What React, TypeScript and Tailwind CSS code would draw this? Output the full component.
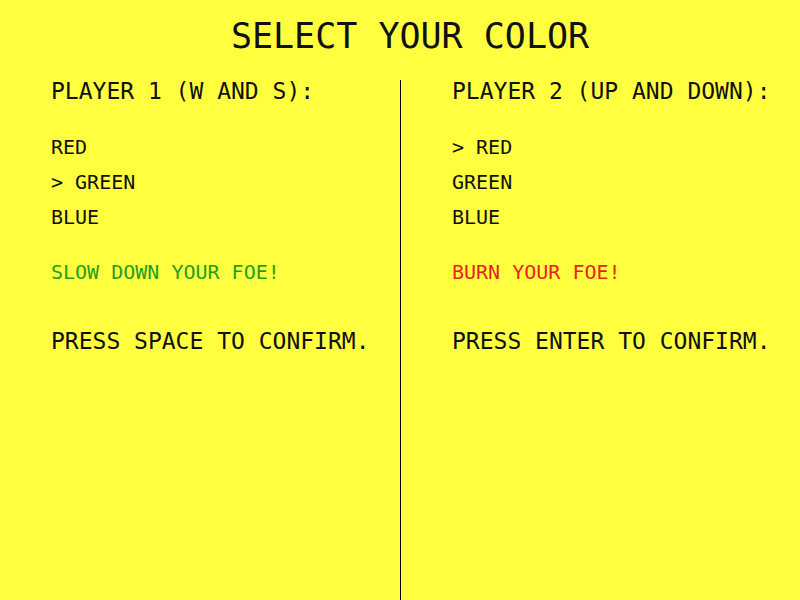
import React from "react";

const font = { fontFamily: '"DejaVu Sans Mono", "Liberation Mono", monospace' };

function Column({
  header,
  options,
  selected,
  hint,
  hintClass,
  confirm,
}: {
  header: string;
  options: string[];
  selected: number;
  hint: string;
  hintClass: string;
  confirm: string;
}) {
  return (
    <div className="flex flex-col flex-1 pl-[51px]">
      <div className="text-[23px] leading-[23px] whitespace-pre">{header}</div>
      <div className="flex flex-col gap-[15px] mt-[34px] text-[20px] leading-[20px]">
        {options.map((o, i) => (
          <div key={o} className="whitespace-pre">
            {i === selected ? "> " + o : o}
          </div>
        ))}
      </div>
      <div className={`mt-[35px] text-[20px] leading-[20px] whitespace-pre ${hintClass}`}>{hint}</div>
      <div className="mt-[48px] text-[23px] leading-[23px] whitespace-pre">{confirm}</div>
    </div>
  );
}

export default function App() {
  return (
    <div className="w-[800px] h-[600px] bg-[#ffff40] text-[#111] overflow-hidden flex flex-col" style={font}>
      <div className="h-[80px] pt-[19px] pl-[20px] text-center text-[35px] leading-[35px]">SELECT YOUR COLOR</div>
      <div className="flex flex-1">
        <div className="w-[400px] flex">
          <Column
            header="PLAYER 1 (W AND S):"
            options={["RED", "GREEN", "BLUE"]}
            selected={1}
            hint="SLOW DOWN YOUR FOE!"
            hintClass="text-[#1f9f1f]"
            confirm="PRESS SPACE TO CONFIRM."
          />
        </div>
        <div className="w-px bg-black" />
        <div className="flex-1 flex">
          <Column
            header="PLAYER 2 (UP AND DOWN):"
            options={["RED", "GREEN", "BLUE"]}
            selected={0}
            hint="BURN YOUR FOE!"
            hintClass="text-[#e81f1f]"
            confirm="PRESS ENTER TO CONFIRM."
          />
        </div>
      </div>
    </div>
  );
}
